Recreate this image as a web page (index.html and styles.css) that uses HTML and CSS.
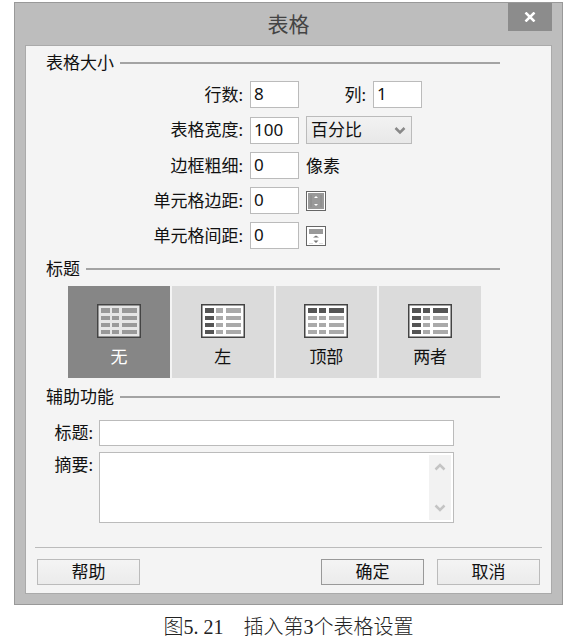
FILE: index.html
```html
<!DOCTYPE html>
<html lang="zh-CN">
<head>
  <meta charset="UTF-8">
  <title>表格</title>
  <link rel="stylesheet" href="styles.css">
</head>
<body>
  <!-- 表格图标 -->
  <svg class="defs" width="0" height="0" aria-hidden="true">
    <symbol id="grid" viewBox="0 0 44 34">
      <rect class="frame" x="0.750" y="0.750" width="42.500" height="32.500" stroke-width="1.500"/>
      <path class="corner" d="M4 4h9v5H4z"/>
      <path class="top" d="M15 4h7v5h-7zM25 4h15v5H25z"/>
      <path class="left" d="M4 12h9v4H4zM4 19h9v4H4zM4 26h9v4H4z"/>
      <path class="cell" d="M15 12h7v4h-7zM25 12h15v4H25zM15 19h7v4h-7zM25 19h15v4H25zM15 26h7v4h-7zM25 26h15v4H25z"/>
    </symbol>
  </svg>

  <figure class="figure">
    <form class="window">
      <header class="titlebar">
        <h1>表格</h1>
        <button type="button" class="close" aria-label="关闭">
          <svg width="12" height="10" viewBox="0 0 12 10"><path d="M1.500 0.500L10.500 9.500M10.500 0.500L1.500 9.500" stroke="#fff" stroke-width="2.500"/></svg>
        </button>
      </header>

      <div class="panel">
        <section class="group">
          <h2>表格大小</h2>
          <div class="sizes">
            <div class="row">
              <label class="name" for="rows">行数:</label>
              <input class="num" id="rows" type="text" value="8">
              <label class="name-cols" for="cols">列:</label>
              <input class="num" id="cols" type="text" value="1">
            </div>
            <div class="row">
              <label class="name" for="width">表格宽度:</label>
              <input class="num" id="width" type="text" value="100">
              <div class="select">
                <select aria-label="宽度单位">
                  <option>百分比</option>
                  <option>像素</option>
                </select>
                <svg class="arrow" width="12" height="8" viewBox="0 0 12 8"><path d="M1.500 1L6 5.500L10.500 1" fill="none" stroke="#888" stroke-width="2.500"/></svg>
              </div>
            </div>
            <div class="row">
              <label class="name" for="border">边框粗细:</label>
              <input class="num" id="border" type="text" value="0">
              <span>像素</span>
            </div>
            <div class="row">
              <label class="name" for="padding">单元格边距:</label>
              <input class="num" id="padding" type="text" value="0">
              <svg class="hint" width="20" height="20" viewBox="0 0 20 20">
                <rect x="0.500" y="0.500" width="19" height="19" fill="#fff" stroke="#666"/>
                <rect x="2" y="2" width="16" height="16" fill="#999"/>
                <path d="M8 7l2-2l2 2zM8 13l2 2l2-2z" fill="#fff"/>
                <path d="M5 4v12M15 4v12" stroke="#888"/>
              </svg>
            </div>
            <div class="row">
              <label class="name" for="spacing">单元格间距:</label>
              <input class="num" id="spacing" type="text" value="0">
              <svg class="hint" width="20" height="20" viewBox="0 0 20 20">
                <rect x="0.500" y="0.500" width="19" height="19" fill="#fff" stroke="#666"/>
                <path d="M3 3h14v5H3z" fill="#999"/>
                <path d="M7 11.500l3-2l3 2zM7.500 14.500h5l-2.500 2.500z" fill="#777"/>
                <path d="M3 17.500h4M13 17.500h4" stroke="#ddd"/>
              </svg>
            </div>
          </div>
        </section>

        <section class="group">
          <h2>标题</h2>
          <div class="choices">
            <label class="choice none">
              <input type="radio" name="header" checked>
              <svg width="44" height="34"><use href="#grid"/></svg>
              <span>无</span>
            </label>
            <label class="choice head-left">
              <input type="radio" name="header">
              <svg width="44" height="34"><use href="#grid"/></svg>
              <span>左</span>
            </label>
            <label class="choice head-top">
              <input type="radio" name="header">
              <svg width="44" height="34"><use href="#grid"/></svg>
              <span>顶部</span>
            </label>
            <label class="choice head-both">
              <input type="radio" name="header">
              <svg width="44" height="34"><use href="#grid"/></svg>
              <span>两者</span>
            </label>
          </div>
        </section>

        <section class="group">
          <h2>辅助功能</h2>
          <div class="access">
            <label for="caption">标题:</label>
            <input id="caption" type="text">
            <label for="summary">摘要:</label>
            <div class="area">
              <textarea id="summary"></textarea>
              <div class="scroll">
                <svg width="12" height="8" viewBox="0 0 12 8"><path d="M1.500 6.500L6 2L10.500 6.500" fill="none" stroke="#c4c4c4" stroke-width="2.500"/></svg>
                <svg width="12" height="8" viewBox="0 0 12 8"><path d="M1.500 1.500L6 6L10.500 1.500" fill="none" stroke="#c4c4c4" stroke-width="2.500"/></svg>
              </div>
            </div>
          </div>
        </section>

        <footer class="actions">
          <button type="button" class="btn help">帮助</button>
          <button type="submit" class="btn ok">确定</button>
          <button type="button" class="btn">取消</button>
        </footer>
      </div>
    </form>
    <figcaption>图<span class="digits">5. 21</span>　插入第<span class="digits">3</span>个表格设置</figcaption>
  </figure>
</body>
</html>
```
FILE: styles.css
```css
* {
  box-sizing: border-box;
}

body {
  margin: 0;
  padding: 2px 5px 0 14px;
  background: #fff;
  color: #111;
  font-family: "Noto Sans", "Noto Sans CJK SC", sans-serif;
  font-size: 17px;
  line-height: 26px;
}

input,
select,
textarea,
button {
  margin: 0;
  border: 1px solid #bbb;
  border-radius: 0;
  background: #fff;
  color: #111;
  font: inherit;
}

.defs {
  position: absolute;
}

.figure {
  margin: 0;
}

.window {
  padding: 0 10px 10px;
  border: 1px solid #999;
  background: #bdbdbd;
}

.titlebar {
  position: relative;
  height: 42px;
}

.titlebar h1 {
  margin: 0;
  color: #444;
  font-size: 21px;
  font-weight: 400;
  line-height: 42px;
  text-align: center;
}

.close {
  position: absolute;
  top: 0;
  right: 0;
  display: flex;
  align-items: center;
  justify-content: center;
  width: 44px;
  height: 28px;
  padding: 0;
  border: 0;
  background: #8c8c8c;
}

.panel {
  padding: 4px 9px 8px;
  border: 1px solid #aaa;
  background: #f4f4f4;
}

.group {
  margin: 0 42px 0 11px;
}

.group h2 {
  display: flex;
  align-items: center;
  gap: 6px;
  margin: 0;
  font-size: 17px;
  font-weight: 400;
}

.group h2::after {
  content: '';
  flex: 1;
  height: 2px;
  background: #a3a3a3;
}

/* 表格大小 */
.sizes {
  display: grid;
  gap: 8px;
  padding: 5px 0 7px;
}

.row {
  display: flex;
  align-items: center;
  gap: 7px;
}

.name {
  width: 197px;
  text-align: right;
}

.name-cols {
  width: 60px;
  text-align: right;
}

.num {
  width: 49px;
  height: 27px;
  padding: 0 3px 2px;
}

.select {
  position: relative;
  width: 106px;
  height: 28px;
}

.select select {
  width: 100%;
  height: 100%;
  padding: 0 4px;
  background: linear-gradient(#f2f2f2, #e8e8e8);
  appearance: none;
}

.arrow {
  position: absolute;
  top: 11px;
  right: 6px;
  pointer-events: none;
}

/* 标题位置 */
.choices {
  display: flex;
  gap: 2px;
  padding: 4px 19px 6px 22px;
}

.choice {
  --dark: #555;
  --cell: #aaa;
  --paper: #fff;
  --corner: var(--dark);
  --top: var(--cell);
  --left: var(--cell);
  position: relative;
  flex: 1;
  display: flex;
  flex-direction: column;
  align-items: center;
  gap: 6px;
  height: 92px;
  padding-top: 18px;
  background: #dbdbdb;
}

.choice input {
  position: absolute;
  opacity: 0;
}

/* 顶部：左上角与首行同为深色 */
.none {
  --cell: #999;
  --paper: #e6e6e6;
  --corner: var(--cell);
  background: #868686;
  color: #fff;
}

.head-left,
.head-both {
  --left: var(--dark);
}

.head-top,
.head-both {
  --top: var(--dark);
}

.frame {
  fill: var(--paper);
  stroke: #444;
}

.corner {
  fill: var(--corner);
}

.top {
  fill: var(--top);
}

.left {
  fill: var(--left);
}

.cell {
  fill: var(--cell);
}

/* 辅助功能 */
.access {
  display: grid;
  grid-template-columns: 47px 1fr;
  gap: 6px;
  padding: 10px 46px 0 0;
}

.access label {
  text-align: right;
}

.access input {
  width: 100%;
  height: 26px;
}

.area {
  display: flex;
  height: 71px;
  padding: 2px;
  border: 1px solid #bbb;
  background: #fff;
}

.area textarea {
  flex: 1;
  min-width: 0;
  border: 0;
  outline: 0;
  resize: none;
}

.scroll {
  display: flex;
  flex-direction: column;
  align-items: center;
  justify-content: space-between;
  width: 22px;
  padding: 8px 0;
  background: #f2f2f2;
}

.actions {
  display: flex;
  gap: 13px;
  margin-top: 24px;
  padding: 11px 2px 0;
  border-top: 1px solid #bbb;
}

.btn {
  width: 103px;
  height: 26px;
  padding: 0;
  border-color: #bbb;
  background: linear-gradient(#f4f4f4, #ebebeb);
  line-height: 24px;
}

.help {
  margin-right: auto;
}

.ok {
  border-color: #999;
}

figcaption {
  padding-top: 9px;
  color: #222;
  font-family: "Noto Sans CJK SC", sans-serif;
  font-size: 20px;
  font-weight: 300;
  line-height: 24px;
  text-align: center;
}

.digits {
  font-family: "Liberation Serif", serif;
  font-weight: 400;
}
```
